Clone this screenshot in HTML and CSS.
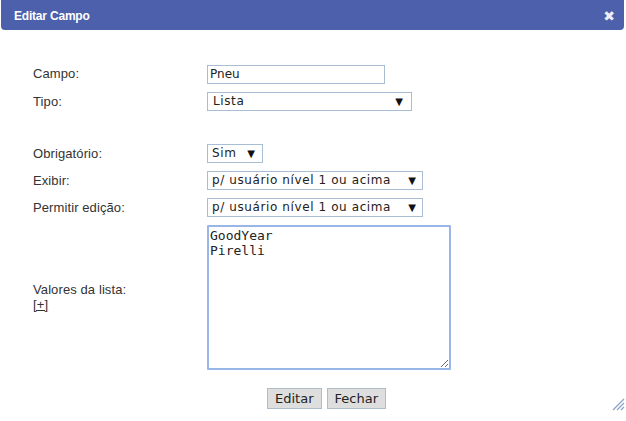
FILE: index.html
```html
<!DOCTYPE html>
<html lang="pt">
<head>
<meta charset="utf-8">
<title>Editar Campo</title>
<link rel="stylesheet" href="styles.css">
</head>
<body>
<div class="dialog">
  <div class="titlebar">
    <span class="title">Editar Campo</span>
    <span class="close">&#10006;</span>
  </div>
  <div class="content">
    <div class="form">
      <label class="lbl">Campo:</label>
      <div><input class="txt" type="text" value="Pneu"></div>

      <label class="lbl">Tipo:</label>
      <div class="sel w-tipo"><span>Lista</span><span class="arr">&#9660;</span></div>

      <div class="spacer"></div>

      <label class="lbl">Obrigatório:</label>
      <div class="sel w-sim"><span>Sim</span><span class="arr">&#9660;</span></div>

      <label class="lbl">Exibir:</label>
      <div class="sel w-lvl"><span>p/ usuário nível 1 ou acima</span><span class="arr">&#9660;</span></div>

      <label class="lbl">Permitir edição:</label>
      <div class="sel w-lvl"><span>p/ usuário nível 1 ou acima</span><span class="arr">&#9660;</span></div>

      <div class="lbl">Valores da lista:<br><a class="plus">[+]</a></div>
      <div><textarea class="area">GoodYear
Pirelli</textarea></div>
    </div>
    <div class="buttons">
      <button class="btn">Editar</button>
      <button class="btn">Fechar</button>
    </div>
  </div>
  <svg class="grip" width="14" height="14" viewBox="0 0 14 14">
    <path d="M13 2 L2 13 M13 6 L6 13 M13 10 L10 13" stroke="#8aa0c8" stroke-width="1.2" fill="none"/>
  </svg>
</div>
</body>
</html>
```
FILE: styles.css
```css
html, body {
  margin: 0;
  padding: 0;
  background: #fff;
}
.dialog {
  position: relative;
  width: 626px;
  height: 421px;
  background: #fff;
  font-family: "Liberation Sans", Arial, sans-serif;
}
.titlebar {
  height: 30px;
  margin: 0 2px 0 1px;
  background: #4d60ab;
  border-radius: 0 0 4px 4px;
  display: flex;
  align-items: center;
  justify-content: space-between;
  padding: 0 9px 0 13px;
  color: #fff;
}
.title {
  font-weight: bold;
  font-size: 12px;
  letter-spacing: -0.2px;
  margin-top: 1px;
}
.close {
  font-size: 14px;
  font-family: "DejaVu Sans", sans-serif;
  font-weight: bold;
  color: #eef0f8;
  margin-top: 1px;
}
.content {
  padding: 34px 6px 0 33px;
}
.form {
  display: grid;
  grid-template-columns: 174px auto;
  row-gap: 8px;
  align-items: center;
}
.lbl {
  font-size: 13px;
  letter-spacing: 0.1px;
  color: #333;
  line-height: 15px;
}
.spacer {
  grid-column: 1 / 3;
  height: 17px;
}
.txt {
  box-sizing: border-box;
  width: 178px;
  height: 19px;
  border: 1px solid #a9bdd3;
  padding: 0 2px;
  margin: 0;
  font-family: "DejaVu Sans", sans-serif;
  font-size: 12px;
  color: #222;
  outline: none;
}
.sel {
  box-sizing: border-box;
  height: 19px;
  border: 1px solid #a9bdd3;
  display: flex;
  align-items: center;
  justify-content: space-between;
  padding: 0 8px 0 4px;
  font-family: "DejaVu Sans", sans-serif;
  font-size: 12px;
  letter-spacing: 0.6px;
  color: #222;
}
.arr {
  font-size: 10px;
  letter-spacing: 0;
  color: #111;
}
.w-tipo { width: 205px; padding-left: 5px; }
.w-sim { width: 56px; padding-right: 7px; }
.w-lvl { width: 216px; padding-right: 6px; }
.plus {
  text-decoration: underline;
  color: #333;
}
.area {
  display: block;
  box-sizing: border-box;
  width: 244px;
  height: 145px;
  margin: 0;
  border: 2px solid #9ab6e6;
  border-radius: 1px;
  padding: 1px 1px;
  font-family: "DejaVu Sans Mono", monospace;
  font-size: 13px;
  line-height: 15px;
  color: #222;
  outline: none;
}
.buttons {
  display: flex;
  justify-content: center;
  gap: 5px;
  margin-top: 18px;
}
.btn {
  height: 21px;
  margin: 0;
  padding: 0 7px;
  background: #dedede;
  border: 1px solid #aebdcc;
  font-family: "DejaVu Sans", sans-serif;
  font-size: 13px;
  color: #222;
}
.grip {
  position: absolute;
  right: 1px;
  bottom: 10px;
}
```
